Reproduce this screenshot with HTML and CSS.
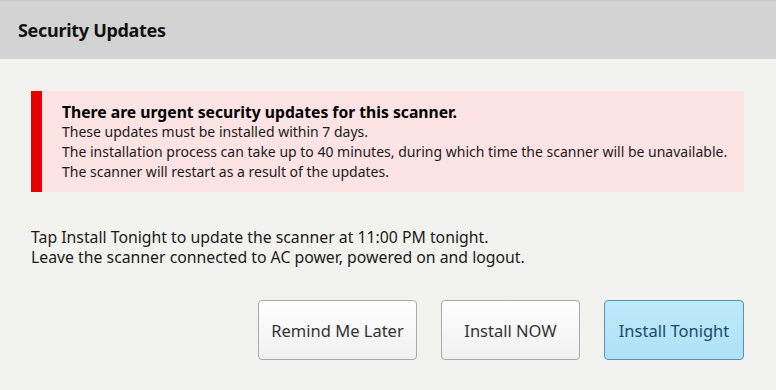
FILE: index.html
```html
<!DOCTYPE html>
<html>
<head>
<meta charset="utf-8">
<link rel="stylesheet" href="styles.css">
</head>
<body>
<div class="dialog">
  <div class="header"><h1 class="title">Security Updates</h1></div>
  <div class="content">
    <div class="alert">
      <div class="alert-bar"></div>
      <div class="alert-body">
        <div class="alert-title">There are urgent security updates for this scanner.</div>
        <div class="alert-line">These updates must be installed within 7 days.</div>
        <div class="alert-line">The installation process can take up to 40 minutes, during which time the scanner will be unavailable.</div>
        <div class="alert-line">The scanner will restart as a result of the updates.</div>
      </div>
    </div>
    <div class="info">
      <div>Tap Install Tonight to update the scanner at 11:00 PM tonight.</div>
      <div>Leave the scanner connected to AC power, powered on and logout.</div>
    </div>
    <div class="actions">
      <button class="btn btn-remind">Remind Me Later</button>
      <button class="btn btn-now">Install NOW</button>
      <button class="btn btn-primary">Install Tonight</button>
    </div>
  </div>
</div>
</body>
</html>
```
FILE: styles.css
```css
html, body {
  margin: 0;
  padding: 0;
  width: 776px;
  height: 390px;
  overflow: hidden;
  background: #f2f2ee;
  font-family: "Noto Sans", "Open Sans", sans-serif;
  color: #111;
}
.dialog {
  display: flex;
  flex-direction: column;
  height: 390px;
}
.header {
  height: 59px;
  background: #d3d3d3;
  border-top: 1px solid #c8c8c8;
  box-sizing: border-box;
  display: flex;
  align-items: center;
  padding-left: 18px;
}
.title {
  margin: 0;
  font-size: 18px;
  font-weight: 700;
  color: #111;
  letter-spacing: -0.3px;
}
.content {
  padding: 32px 32px 0 31px;
  display: flex;
  flex-direction: column;
}
.alert {
  display: flex;
  background: #fde3e4;
  height: 101px;
}
.alert-bar {
  width: 11px;
  background: #e60000;
  flex: none;
}
.alert-body {
  padding: 11px 0 0 20px;
  font-size: 14px;
  line-height: 20px;
  color: #1a1a1a;
}
.alert-title {
  font-size: 15.7px;
  font-weight: 700;
  color: #000;
}
.info {
  margin-top: 35px;
  font-size: 15.8px;
  line-height: 20px;
  color: #1a1a1a;
}
.actions {
  margin-top: 33px;
  display: flex;
  justify-content: flex-end;
  gap: 24px;
}
.btn {
  height: 60px;
  border: 1px solid #a9a9a9;
  border-radius: 4px;
  background: linear-gradient(#ffffff, #f0f0f0);
  font-family: "Noto Sans", "Open Sans", sans-serif;
  font-size: 16.5px;
  color: #333;
  padding: 0;
}
.btn-remind { width: 159px; }
.btn-now { width: 139px; }
.btn-primary {
  width: 140px;
  background: linear-gradient(#bfe9fa, #ade2f7);
  border-color: #5f8fb3;
  color: #1b4a6e;
}
```
